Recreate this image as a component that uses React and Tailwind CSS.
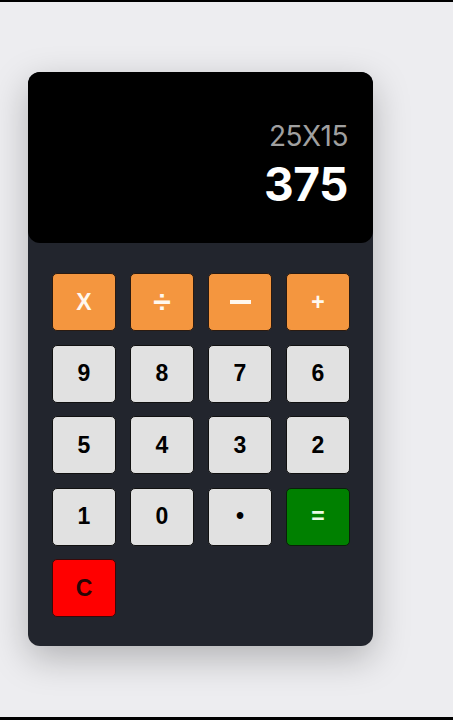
import React from "react";

const keys = [
  { label: "X", kind: "op" },
  { label: "÷", kind: "op", big: true },
  { label: "minus", kind: "op" },
  { label: "+", kind: "op" },
  { label: "9" }, { label: "8" }, { label: "7" }, { label: "6" },
  { label: "5" }, { label: "4" }, { label: "3" }, { label: "2" },
  { label: "1" }, { label: "0" }, { label: "•" },
  { label: "=", kind: "eq" },
  { label: "C", kind: "clr" },
];

function cls(kind) {
  if (kind === "op") return "bg-[#f4963f] text-[#fff8ee] border-[#2a1a10]";
  if (kind === "eq") return "bg-[#008000] text-[#eafbe6] border-[#0a1f0a]";
  if (kind === "clr") return "bg-[#ff0000] text-[#2a0505] border-[#3a0808]";
  return "bg-[#e1e1e1] text-black border-[#111111]";
}

export default function App() {
  return (
    <div className="w-[453px] h-[720px] bg-[#ededf0] border-t-2 border-b-[3px] border-black overflow-hidden">
      <div className="pt-[70px] pl-[28px]">
        <div className="w-[345px] h-[574px] rounded-[12px] bg-[#22252d] shadow-[0_12px_36px_rgba(0,0,0,0.25)] overflow-hidden flex flex-col">
          <div className="h-[171px] bg-black rounded-b-[12px] flex flex-col items-end justify-end pr-[25px] pb-[34px]">
            <div className="text-[28px] leading-[30px] text-[#a0a0a0] font-['Inter',sans-serif] tracking-[-0.5px] mb-[8px]">25X15</div>
            <div className="text-[46px] leading-[50px] font-bold text-white font-['Inter',sans-serif] tracking-[-0.5px]">375</div>
          </div>
          <div className="grid grid-cols-[repeat(4,64px)] auto-rows-[58px] gap-x-[14px] gap-y-[13.5px] pl-[24px] pt-[30px]">
            {keys.map((k, i) => (
              <button
                key={i}
                className={`rounded-[5px] border flex items-center justify-center font-bold font-['Liberation_Sans',Arial,sans-serif] ${k.big ? "text-[32px]" : "text-[23px]"} ${cls(k.kind)}`}
              >
                {k.label === "minus" ? (
                  <span className="block w-[21px] h-[4px] bg-[#fff8ee]" aria-label="minus" />
                ) : (
                  k.label
                )}
              </button>
            ))}
          </div>
        </div>
      </div>
    </div>
  );
}
